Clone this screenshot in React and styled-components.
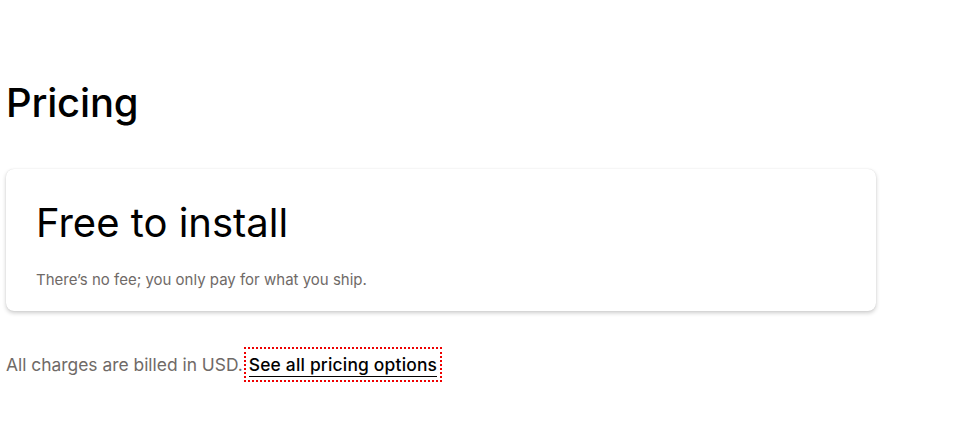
import React from 'react'
import styled, { createGlobalStyle } from 'styled-components'

const GlobalStyle = createGlobalStyle`
  body {
    margin: 0;
    background: #fff;
    font-family: Inter, "Noto Sans", sans-serif;
    color: #000;
  }
`

const Page = styled.main`
  padding: 75px 84px 40px 6px;
`

const Heading = styled.h1`
  margin: 0 0 38px 0;
  font-size: 40px;
  font-weight: 500;
  line-height: 56px;
  letter-spacing: -0.2px;
`

const Card = styled.section`
  background: #fff;
  border-radius: 8px;
  box-shadow: 0 2px 4px rgba(0, 0, 0, 0.2), 0 0 1px rgba(0, 0, 0, 0.14);
  padding: 26px 30px 20px;
`

const CardTitle = styled.h2`
  margin: 0 0 18px 0;
  font-size: 40px;
  font-weight: 400;
  line-height: 56px;
`

const CardText = styled.p`
  margin: 0;
  font-size: 15px;
  line-height: 22px;
  color: #6f6a67;
`

const Footer = styled.p`
  margin: 41px 0 0 0;
  font-size: 17.4px;
  line-height: 26px;
  color: #6f6a67;
`

const PricingLink = styled.a`
  color: #000;
  font-weight: 500;
  letter-spacing: 0.2px;
  text-decoration: none;
  border-bottom: 1px solid #000;
  padding: 2px 0 1px;
  outline: 2px dotted #e00;
  outline-offset: 3px;
  margin-left: 6px;
`

export default function App() {
  return (
    <>
      <GlobalStyle />
      <Page>
        <Heading>Pricing</Heading>
        <Card>
          <CardTitle>Free to install</CardTitle>
          <CardText>There’s no fee; you only pay for what you ship.</CardText>
        </Card>
        <Footer>
          All charges are billed in USD.
          <PricingLink href="#">See all pricing options</PricingLink>
        </Footer>
      </Page>
    </>
  )
}
